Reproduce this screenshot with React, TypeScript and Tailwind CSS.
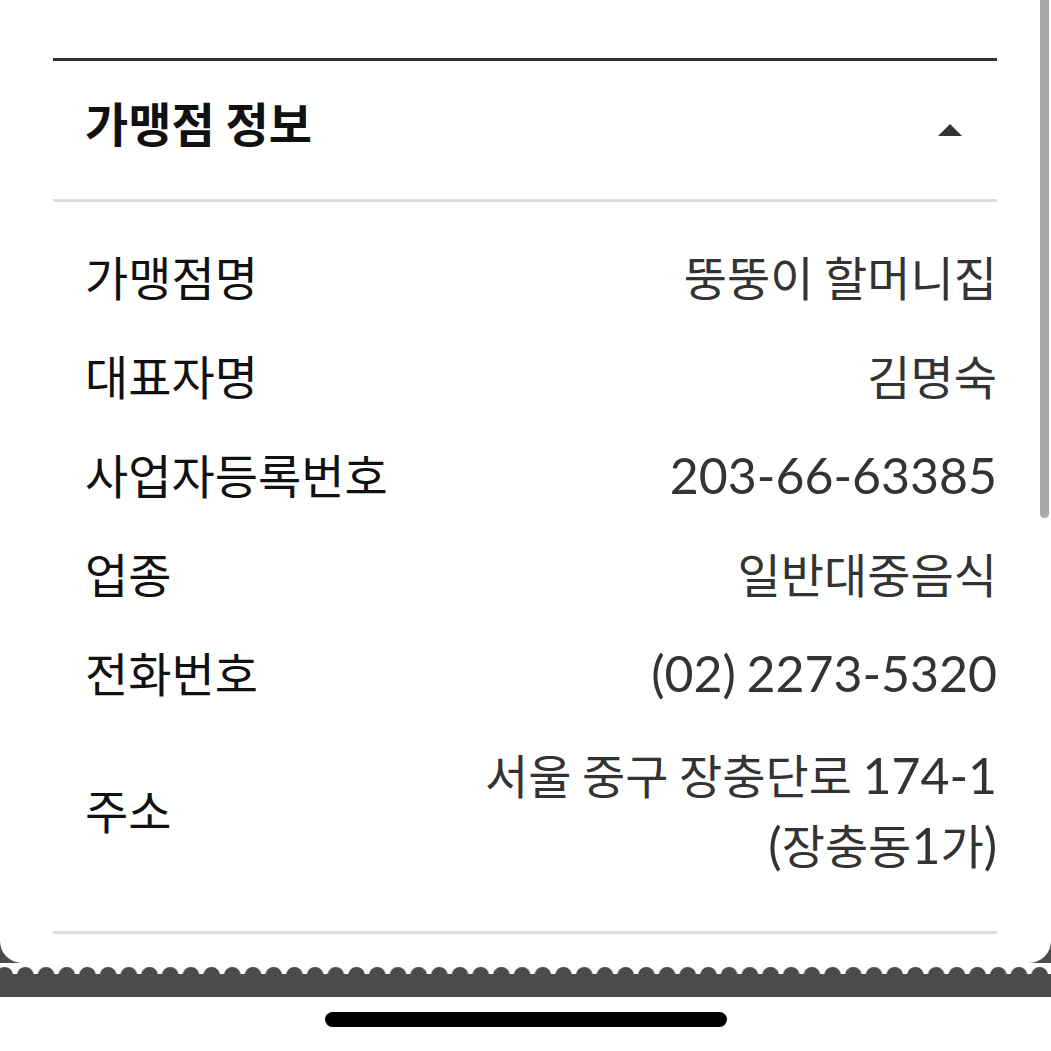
import React from 'react';

const ROWS: { label: string; value: string[] }[] = [
  { label: '가맹점명', value: ['뚱뚱이 할머니집'] },
  { label: '대표자명', value: ['김명숙'] },
  { label: '사업자등록번호', value: ['203-66-63385'] },
  { label: '업종', value: ['일반대중음식'] },
  { label: '전화번호', value: ['(02) 2273-5320'] },
  { label: '주소', value: ['서울 중구 장충단로 174-1', '(장충동1가)'] },
];

const kr = "font-['Noto_Sans_CJK_KR',sans-serif]";

// latin runs (digits, parens, hyphens) are set a bit larger in Lato
function Value({ text }: { text: string }) {
  const parts = text.split(/([0-9()\-]+)/).filter(Boolean);
  return (
    <span className={`${kr} text-[47px] leading-[70px] text-[#333] whitespace-pre`}>
      {parts.map((p, i) =>
        /^[0-9()\-]+$/.test(p) ? (
          <span key={i} className="font-['Lato',sans-serif] text-[50px] leading-none">{p}</span>
        ) : (
          <span key={i} className="leading-none">{p}</span>
        )
      )}
    </span>
  );
}

function Scallops() {
  return (
    <svg width="1051" height="30" viewBox="0 0 1051 30" className="block">
      <defs>
        <pattern id="bump" x="-5.7" y="0" width="20.7" height="30" patternUnits="userSpaceOnUse">
          <circle cx="10.35" cy="8.5" r="8.5" fill="#4b4b4b" />
        </pattern>
      </defs>
      <rect x="0" y="0" width="1051" height="17" fill="url(#bump)" />
      <rect x="0" y="7" width="1051" height="23" fill="#4b4b4b" />
    </svg>
  );
}

export default function App() {
  return (
    <div className="relative w-[1051px] h-[1051px] bg-white overflow-hidden flex flex-col">
      <div className="bg-[#4b4b4b]">
        <div className="bg-white rounded-b-[22px] h-[963px] pl-[53px] pr-[54px] pt-[58px]">
          <div className="h-[144px] border-t-[3px] border-b-[3px] border-t-[#333] border-b-[#dddddd] flex items-center justify-between pl-[32px] pr-[35px]">
            <h2 className={`${kr} text-[47px] font-bold text-[#111] leading-none mb-[18px]`}>가맹점 정보</h2>
            <svg width="24" height="12" viewBox="0 0 24 12">
              <polygon points="12,0 24,12 0,12" fill="#333" />
            </svg>
          </div>

          <div className="flex flex-col gap-[29px] pt-[39px] pb-[52px] border-b-[3px] border-[#dddddd]">
            {ROWS.map((r) => (
              <div key={r.label} className={`flex items-center justify-between pl-[32px] ${r.value.length > 1 ? 'mt-[3px]' : ''}`}>
                <span className={`${kr} text-[47px] leading-[70px] text-[#111]`}>{r.label}</span>
                <div className="flex flex-col items-end">
                  {r.value.map((v) => (
                    <Value key={v} text={v} />
                  ))}
                </div>
              </div>
            ))}
          </div>
        </div>
      </div>

      <div className="h-[4px] bg-white" />
      <Scallops />
      <div className="flex-1 bg-white pt-[15px]">
        <div className="mx-auto w-[402px] h-[15px] rounded-full bg-black" />
      </div>

      <div className="absolute top-0 right-[2px] w-[9px] h-[518px] rounded-b-full bg-[#a8a8a8]" />
    </div>
  );
}
